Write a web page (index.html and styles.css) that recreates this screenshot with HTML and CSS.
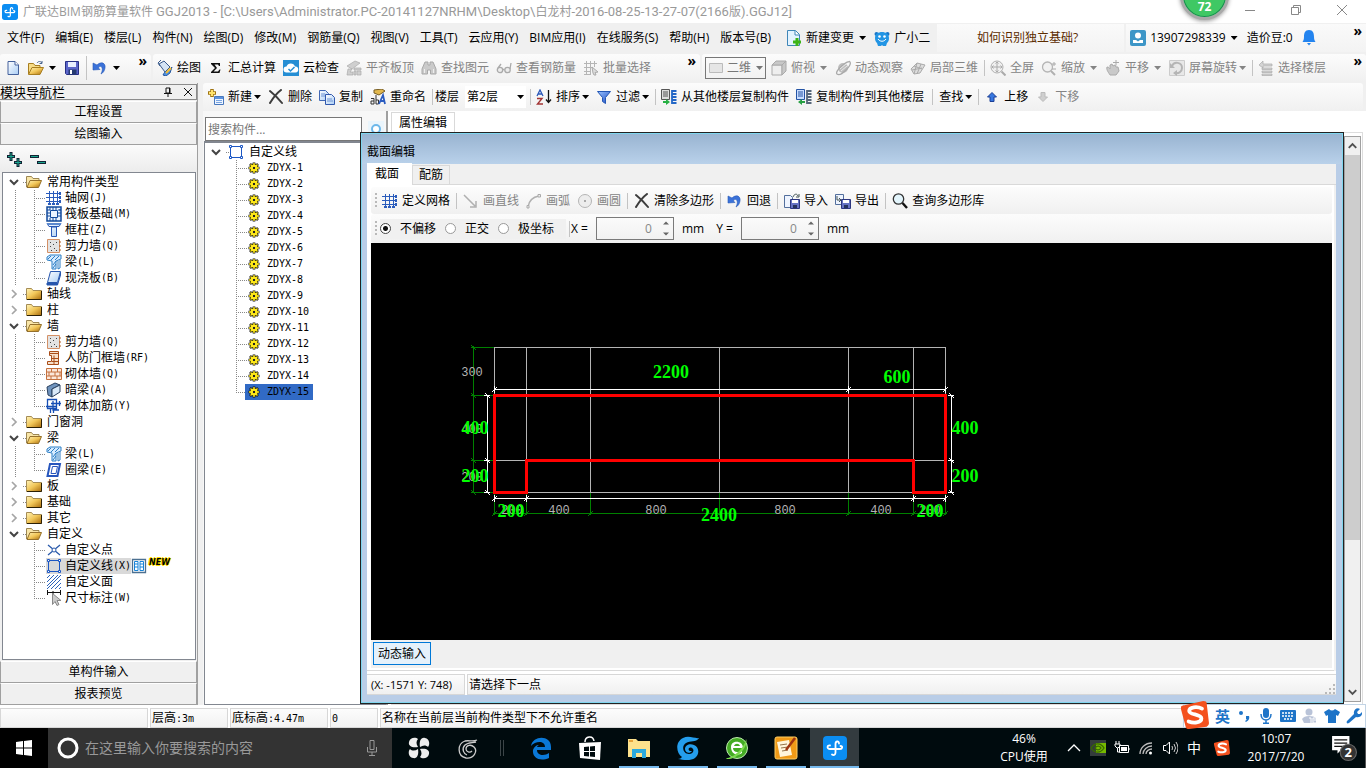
FILE: index.html
```html
<!DOCTYPE html>
<html lang="zh-CN">
<head>
<meta charset="utf-8">
<title>广联达BIM钢筋算量软件 GGJ2013</title>
<link rel="stylesheet" href="styles.css">
</head>
<body>
<svg class="defs" aria-hidden="true">
  <defs>
    <linearGradient id="gold" x1="0" y1="0" x2="1" y2="1"><stop offset="0" stop-color="#fff3b8"/><stop offset=".5" stop-color="#f1c658"/><stop offset="1" stop-color="#a86b0c"/></linearGradient>
    <linearGradient id="blue" x1="0" y1="0" x2="1" y2="1"><stop offset="0" stop-color="#9cc4ff"/><stop offset="1" stop-color="#1747c0"/></linearGradient>
    <linearGradient id="pale" x1="0" y1="0" x2="1" y2="1"><stop offset="0" stop-color="#fff"/><stop offset="1" stop-color="#a9cdf5"/></linearGradient>
  </defs>
  <symbol id="logo" viewBox="0 0 24 24"><rect width="24" height="24" rx="4" fill="#0b8df2"/><g fill="none" stroke="#fff" stroke-width="1.800" stroke-linecap="round"><path d="M9 18.500c2 1.500 3.500 0 3.500-2V8c0-3 3.500-3.500 3.500-.5"/><path d="M7 9.500c-3-.5-3.500 3.500 0 3.500h10c2.500 0 3-3 .5-3"/></g></symbol>
  <symbol id="new" viewBox="0 0 16 16"><path d="M3 1.500h7l3.500 3.500v9.500H3z" fill="url(#pale)" stroke="#44619c"/><path d="M10 1.500V5h3.500" fill="#fff" stroke="#44619c"/></symbol>
  <symbol id="open" viewBox="0 0 16 16"><path d="M.5 14V3.500h5l1.500 2h5V8" fill="#f7dc87" stroke="#a87e20"/><path d="M.5 14.500 4 7.500h11.500l-3.500 7z" fill="url(#gold)" stroke="#a87e20"/><path d="M9 3c1.500-2 3.500-2 5 0m0-2v2.500h-2.500" fill="none" stroke="#47638d"/></symbol>
  <symbol id="save" viewBox="0 0 16 16"><path d="M1.500 1.500h13v13h-12l-1-1z" fill="#5b65c9" stroke="#262f85"/><path d="M4 2h8v5H4z" fill="#e8efff"/><path d="M4.500 9.500h8v5h-8z" fill="#263b71"/><path d="M6 10h2v4H6z" fill="#fff"/></symbol>
  <symbol id="undo" viewBox="0 0 16 16"><path d="M5 5c4-4 9-2 8 3-.5 3-2 5-4 6 1.500-3 2-6 0-7.500C8 6 7 6.500 6.500 8L8 9.500 1 10V3z" fill="#3b72d9" stroke="#2759b6" stroke-width=".6"/></symbol>
  <symbol id="paint" viewBox="0 0 16 16"><path d="m2 4 5-3 6 6-5 5z" fill="#d5e4f5" stroke="#38598b"/><path d="M3 6 1 3l3-3" fill="none" stroke="#38598b"/><path d="M6 15c2-4 3-4 5-4l4-4-2 6-4 3z" fill="#4b8fe0" stroke="#2759a0"/><path d="m9 13 5-5" stroke="#f3bd36" stroke-width="2"/></symbol>
  <symbol id="sigma" viewBox="0 0 16 16"><path d="M3 3h9v3h-1l-1-1.500H6.500L9 8l-3.500 3.500h4.500l1.500-2h1L11.500 13H3v-1l4-4-4-4z" fill="#111"/></symbol>
  <symbol id="cloud" viewBox="0 0 16 16"><path d="M0 0h16v16H0z" fill="#258ed4"/><path d="M3.500 12.500a3 3 0 0 1 0-6 4.500 4.500 0 0 1 8.500 0 3 3 0 0 1 .5 6z" fill="#fff"/><path d="m5.500 9 2 2 4-4" fill="none" stroke="#258ed4" stroke-width="1.500"/></symbol>
  <symbol id="slab" viewBox="0 0 16 16"><path d="m1 6 8-5 5 2-8 6zM8 8h7v2H8zm0 3h2v4H8zm3 0h4v4h-4zM2 9h4l-2 3h3v3H1z" fill="#cfcfcf" stroke="#aaa" stroke-width=".7"/></symbol>
  <symbol id="binoc" viewBox="0 0 16 16"><path d="M4 2h3v3h2V2h3l3 7v5H9.500v-4h-3v4H1V9z" fill="#cacaca" stroke="#a8a8a8"/><path d="M3.500 9v4m9-4v4" stroke="#eee"/></symbol>
  <symbol id="glasses" viewBox="0 0 16 16"><g fill="#ededed" stroke="#aaa" stroke-width="1.300"><circle cx="4" cy="10" r="2.700"/><circle cx="11.500" cy="10" r="2.700"/><path d="M6.500 9.500h2M2 8l3-4M14 9l1-6" fill="none"/></g></symbol>
  <symbol id="batch" viewBox="0 0 16 16"><path d="M1 3.500h13M1 7.500h8M1 11.500h7M3.500 1v14m4-14v14m4-14v6M1 14.500h6" stroke="#b5b5b5" fill="none"/><path d="m9 7 6 5-3 .5L13 15h-2l-1-2z" fill="#ddd" stroke="#aaa"/></symbol>
  <symbol id="flat" viewBox="0 0 16 16"><path d="M1.500 3.500h13v9h-13z" fill="#e5e5e5" stroke="#bbb"/></symbol>
  <symbol id="cube" viewBox="0 0 16 16"><path d="M1 5h10v10H1z" fill="#eee" stroke="#aaa"/><path d="m1 5 4-4h10l-4 4zM15 1v10l-4 4V5z" fill="#c8c8c8" stroke="#aaa"/></symbol>
  <symbol id="orbit" viewBox="0 0 16 16"><circle cx="8" cy="8" r="5" fill="#bdbdbd"/><path d="M2 14C-1 11 14-1 15 2c2 3-9 15-13 12z" fill="none" stroke="#a9a9a9" stroke-width="1.300"/><path d="m5 9 6-5M6 11l6-5" stroke="#e8e8e8"/></symbol>
  <symbol id="part3d" viewBox="0 0 16 16"><path d="m1 9 6-6 8 2-5 8-6 1z" fill="#ddd" stroke="#aaa"/><path d="m4 6 8 3M7 3l-3 11M11 4l-4 10M2 10l10-2" stroke="#aaa" fill="none"/></symbol>
  <symbol id="fit" viewBox="0 0 16 16"><circle cx="7" cy="7" r="6" fill="#f0f0f0" stroke="#b0b0b0"/><path d="M7 2v10M2 7h10M5.500 3.500 7 2l1.500 1.500M5.500 10.500 7 12l1.500-1.500M3.500 5.500 2 7l1.500 1.500m7-3L12 7l-1.500 1.500" fill="none" stroke="#aaa"/><path d="m11.500 11.500 4 4" stroke="#aaa" stroke-width="2"/></symbol>
  <symbol id="zoom" viewBox="0 0 16 16"><circle cx="6.500" cy="7" r="5" fill="#f2f2f2" stroke="#b5b5b5" stroke-width="1.300"/><path d="m10 11 4 4" stroke="#b0b0b0" stroke-width="2"/><path d="M11 4h4m-2-2v4M11 9h4" stroke="#aaa"/></symbol>
  <symbol id="pan" viewBox="0 0 16 16"><path d="M2 7c2 0 2 1 3 2V5l2-1 1 2 2-1 1 2h2l1 4-3 4H5c-1-2-4-5-3-8z" fill="#c9c9c9" stroke="#aaa"/><path d="M8 2.500h6m-3-3v6" stroke="#aaa"/></symbol>
  <symbol id="rotate" viewBox="0 0 16 16"><path d="M.5.500h15v15H.5z" fill="#e8e8e8" stroke="#ccc"/><path d="M3 6c2-5 10-4 10 2 0 4-4 6-7 5" fill="none" stroke="#b5b5b5" stroke-width="2"/><path d="M1 3v5h5M8 10l-4 3 4 3" fill="#b5b5b5"/></symbol>
  <symbol id="floors" viewBox="0 0 16 16"><path d="m1 5 4-4v3h9v2H5v2zM4 8h10v1.500H4zm0 3h10v1.500H4zm0 3h10v1.500H4z" fill="#d5d5d5" stroke="#aaa" stroke-width=".7"/></symbol>
  <symbol id="create" viewBox="0 0 16 16"><path d="M4 0v8M0 4h8" stroke="#a07410" stroke-width="3.500"/><path d="M4 1v6M1 4h6" stroke="#ffe36d" stroke-width="2"/><path d="M6.500 7.500h9v8h-9z" fill="#eef5ff" stroke="#4878bd"/><path d="M7 8h8v2H7z" fill="#5b92df"/><path d="M8 11.500h6M8 13.500h6" stroke="#79a5e2"/></symbol>
  <symbol id="del" viewBox="0 0 16 16"><path d="M2 2c5 4 8 7 12 12M13 1C9 4 5 9 2 14" fill="none" stroke="#3c3c3c" stroke-width="2" stroke-linecap="round"/></symbol>
  <symbol id="copy" viewBox="0 0 16 16"><path d="M.5 1.500h6l3 3v7h-9z" fill="url(#pale)" stroke="#4168b5"/><path d="M6.500 5.500h6l3 3v7h-9z" fill="url(#pale)" stroke="#3158ad"/><path d="M2 5h4M2 7h4m2 3h5m-5 2h6" stroke="#6c93d4"/></symbol>
  <symbol id="rename" viewBox="0 0 16 16"><path d="m4 1 8-1 3 2-6 4-5-2z" fill="#e2b84d" stroke="#765c24"/><path d="M1 9.500h3V15H1v-3h3M6 6v9h2.500v-4H6" fill="none" stroke="#333"/><path d="m9 15 4-9 2 9m-5-3h5" fill="none" stroke="#2b5cc0" stroke-width="1.800"/></symbol>
  <symbol id="sort" viewBox="0 0 16 16"><path d="m1 7 3-6 3 6M2 5h4" fill="none" stroke="#2b58b9" stroke-width="1.300"/><path d="M1 9.500h5L1.500 15H7" fill="none" stroke="#a23434" stroke-width="1.400"/><path d="M12.500 1v12M10 10.500l2.500 3 2.500-3" fill="none" stroke="#111" stroke-width="1.300"/></symbol>
  <symbol id="filter" viewBox="0 0 16 16"><path d="M1.500 2.500h13L9.500 8.500v6l-3-2v-4z" fill="url(#blue)" stroke="#2457b5"/></symbol>
  <symbol id="fromfloor" viewBox="0 0 16 16"><path d="M.5.500h8v10h-8z" fill="#ddd" stroke="#555"/><path d="M2 3h5M2 5h5M2 7h5" stroke="#555"/><path d="M2 12h3v-2L9 13l-4 3v-2H2z" fill="#27b043"/><path d="M11.500 2h4m-4 3h4m-4 3h4m-4 3h4m-4 3h4M11 1v14" stroke="#2467c6" stroke-width="1.800"/></symbol>
  <symbol id="tofloor" viewBox="0 0 16 16"><path d="M.5.500h8v10h-8z" fill="#c9ddff" stroke="#2454a5"/><path d="M2 3h5M2 5h5M2 7h5" stroke="#2454a5"/><path d="M9 12H6v-2l-4 3 4 3v-2h3z" fill="#27a043"/><path d="M11.500 2h4m-4 3h4m-4 3h4m-4 3h4m-4 3h4M11 1v14" stroke="#56677a" stroke-width="1.800"/></symbol>
  <symbol id="up" viewBox="0 0 16 16"><path d="m8 3.500 4.500 4.500H10v4.500H6V8H3.500z" fill="#3777df" stroke="#1b3f96"/></symbol>
  <symbol id="down" viewBox="0 0 16 16"><path d="m8 12.500 4.500-4.500H10V3.500H6V8H3.500z" fill="#cfcfcf" stroke="#bbb"/></symbol>
  <symbol id="change" viewBox="0 0 16 16"><path d="M1.500.500h8l4 4v11h-12z" fill="#e3f3ff" stroke="#3f86b8"/><path d="M9 1v4h4" fill="#fff" stroke="#3f86b8"/><path d="M11 8v8M7 12h8" stroke="#3cb418" stroke-width="3"/></symbol>
  <symbol id="mascot" viewBox="0 0 16 16"><circle cx="2.500" cy="4" r="2" fill="#1976c7"/><circle cx="13.500" cy="4" r="2" fill="#1976c7"/><path d="M1 8c0-8 14-8 14 0 0 3-1 4-2 5l-1 3h-3l-1-1-1 1H4l-1-3C2 12 1 11 1 8z" fill="#2395e4"/><circle cx="5.500" cy="6.500" r="1.300" fill="#fff"/><circle cx="10.500" cy="6.500" r="1.300" fill="#fff"/><path d="M4 9c2 3 6 3 8 0" stroke="#fff" fill="none"/></symbol>
  <symbol id="user" viewBox="0 0 16 16"><rect width="16" height="16" rx="2" fill="#3d96c7"/><circle cx="8" cy="5.500" r="3" fill="#fff"/><path d="M3 13v-3h3l2 1.500L10 10h3v3z" fill="#fff"/></symbol>
  <symbol id="bell" viewBox="0 0 16 16"><path d="M8 0c4 0 5 3 5 7 0 3 1 4 1.500 5h-13C2 11 3 10 3 7c0-4 1-7 5-7zM6 13h4l-2 2.500z" fill="#2484ef"/></symbol>
  <symbol id="folder" viewBox="0 0 16 16"><path d="M.5 2.500h5l1.500 2h8.500v9H.5z" fill="url(#gold)" stroke="#a58c55"/><path d="M15.500 5v8.500H1" fill="none" stroke="#2c2005"/></symbol>
  <symbol id="folderopen" viewBox="0 0 16 16"><path d="M.5 13V2.500h5l1.500 2h6V7" fill="#f9e6a8" stroke="#9c8652"/><path d="M1 13.500 4 6.500h11.500l-3 7z" fill="url(#gold)" stroke="#94702c"/></symbol>
  <symbol id="grid" viewBox="0 0 16 16"><path d="M0 3.500h14M0 7.500h14M0 11.500h14M3.500 1v14m4-14v14m4-14v14" stroke="#2a5cbc"/><path d="M13 2h2v3h-2zm0 4h2v3h-2zm0 4h2v3h-2zM2 13h3v2H2zm4 0h3v2H6zm4 0h3v2h-3z" fill="#2a5cbc"/></symbol>
  <symbol id="raft" viewBox="0 0 16 16"><path d="M1 1h14v14H1z" fill="#eaf3ff" stroke="#124a9c" stroke-width="1.500"/><path d="M4.500 4.500h7v7h-7zM4 1v3M7 1v3m3-3v3m3 0h2M4 12v3m3-3v3m3-3v3M1 4h3M1 7h3m-3 3h3m8-6h3m-3 3h3m-3 3h3" fill="none" stroke="#124a9c"/></symbol>
  <symbol id="column" viewBox="0 0 16 16"><path d="M1 1.500h14l-2 3H3zM5.500 5h5v9.500h-5z" fill="url(#pale)" stroke="#2858b6"/><path d="M1 1h14v2H1z" fill="#5c88ce"/></symbol>
  <symbol id="wall" viewBox="0 0 16 16"><path d="M1.500 1.500h12v13h-12z" fill="#e3e3e3" stroke="#d49066"/><path d="M4 4h1v1H4zm3 2h1v1H7zM4 8h1v1H4zm4 2h1v1H8zm-3 2h1v1H5zm5-8h1v1h-1zm0 8h1v1h-1z" fill="#444"/><path d="M13 4h2M13 8h2m-2 4h2" stroke="#b55e21"/></symbol>
  <symbol id="beam" viewBox="0 0 16 16"><path d="m1 3 3-2h11v4l-5 2v8H6V7L1 6z" fill="#d6ebff" stroke="#2d7fc5"/><path d="m2 5 3-3m0 4 4-4m0 4 4-4M7 11l3-4m-3 7 3-4M12 7v8l2-1V6" stroke="#2d7fc5" fill="none"/></symbol>
  <symbol id="slabb" viewBox="0 0 16 16"><path d="M4.500 1.500h10l-3 11h-10z" fill="url(#pale)" stroke="#2756ad"/><path d="M1 13h10.500v2H1zM14.500 2v3l-3 10" fill="#2756ad" stroke="#2756ad"/></symbol>
  <symbol id="ring" viewBox="0 0 16 16"><path d="M4 2h10l-2.500 12h-10z" fill="#fff" stroke="#2756bd" stroke-width="2"/><path d="M6.500 4.500h5l-1.500 7H5z" fill="#fff" stroke="#2756bd"/></symbol>
  <symbol id="doorwall" viewBox="0 0 16 16"><path d="M3.500 1.500h9v13h-11v-3h4v-6h-2z" fill="#f7dfc9" stroke="#a94d18"/><path d="M4 3.500h8m-4 2v9m-2-6h6m-6 3h6" stroke="#a94d18"/></symbol>
  <symbol id="brick" viewBox="0 0 16 16"><path d="M.5 2.500h15v11H.5z" fill="#fbe8dc" stroke="#c5713e"/><path d="M1 6h14M1 10h14M5.500 3v3m6-3v3M3 6v4m6-4v4m5-4v4m-9 0v3m6-3v3" stroke="#c5713e"/></symbol>
  <symbol id="hidden" viewBox="0 0 16 16"><path d="m1 5 8-4 5 2-8 4v8l-4-2z" fill="#6f93bd" stroke="#29405f"/><path d="m6 7 8-4v7l-8 5z" fill="#d9e9f8" stroke="#29405f"/></symbol>
  <symbol id="rebar" viewBox="0 0 16 16"><path d="M1.500 1.500h9v9h-9zM0 8.500h10M4.500 11v4m3-4v4M5 5.500h10M13.500 3v5M7 3v9h6" stroke="#174fb5" stroke-width="1.300" fill="none"/></symbol>
  <symbol id="point" viewBox="0 0 16 16"><path d="m2 3 12 10M14 3 2 13" stroke="#2a5aab" stroke-width="1.300"/><circle cx="8" cy="8" r="2" fill="#fff" stroke="#2a5aab"/></symbol>
  <symbol id="poly" viewBox="0 0 16 16"><path d="M2.500 2.500h11v11h-11z" fill="none" stroke="#1c57c4"/><path d="M1.500 1.500h2v2h-2zm11 0h2v2h-2zm-11 11h2v2h-2zm11 0h2v2h-2z" fill="#fff" stroke="#1c57c4"/></symbol>
  <symbol id="hatch" viewBox="0 0 16 16"><path d="m1 4 3-3M1 8l7-7M1 12 12 1M1 15 15 1M5 15 15 5M9 15l6-6m-2 6 2-2" stroke="#2b63ba"/></symbol>
  <symbol id="dim" viewBox="0 0 16 16"><path d="M1 2.500h14M1.500 0v5m13-5v5M7 1v3" stroke="#111"/><path d="M6.500 3.500v11l2.500-3 2 4 2-1-2-4h4z" fill="#ccc" stroke="#888"/></symbol>
  <symbol id="gear" viewBox="0 0 16 16"><path d="M8 2.500v11M2.500 8h11M4 4l8 8m0-8-8 8" stroke="#111" stroke-width="2.600"/><circle cx="8" cy="8" r="4.500" fill="#111"/><path d="M8 3v10M3 8h10M4.500 4.500l7 7m0-7-7 7" stroke="#ffe91a" stroke-width="1.400"/><circle cx="8" cy="8" r="2.800" fill="none" stroke="#ffe91a" stroke-width="1.600"/><path d="M7 7h2v2H7z" fill="#222"/></symbol>
  <symbol id="expand" viewBox="0 0 10 16"><path d="m1 6 4 4 4-4" fill="none" stroke="#444" stroke-width="2"/></symbol>
  <symbol id="collapse" viewBox="0 0 10 16"><path d="m3 4 4 4-4 4" fill="none" stroke="#a5a5a5" stroke-width="1.700"/></symbol>
  <symbol id="info" viewBox="0 0 16 16"><path d="M1.500 1.500h13v13h-13z" fill="#fff" stroke="#4c7091" stroke-width="1.300"/><path d="M3.500 3.500h3.500v9H3.500zM9 3.500h3.500v9H9zM4 6h3m-3 3h3m2-3h3M9 9h3" fill="none" stroke="#1683d8"/></symbol>
  <symbol id="line" viewBox="0 0 16 16"><path d="m1 2 11 11m1-5v6H7" fill="none" stroke="#b0b0b0" stroke-width="1.500"/></symbol>
  <symbol id="arc" viewBox="0 0 16 16"><path d="M2 14C3 7 7 4 13 3" fill="none" stroke="#b0b0b0" stroke-width="1.500"/><path d="M12 1.500h2.500V4H12zM1 12.500h2V15H1z" fill="#eee" stroke="#aaa"/></symbol>
  <symbol id="circle" viewBox="0 0 16 16"><circle cx="8" cy="8" r="6.500" fill="#ededed" stroke="#b5b5b5"/><path d="M7 7h2v2H7z" fill="#aaa"/></symbol>
  <symbol id="import" viewBox="0 0 16 16"><path d="M.5 2.500h6l2 2v10h-8z" fill="#eef4ff" stroke="#536f9d"/><path d="M6.500 6.500h9v9h-9z" fill="#6572c4" stroke="#2d367f"/><path d="M8 7h6v3H8z" fill="#fff"/><path d="M9 12h4v3H9z" fill="#25325e"/><path d="M9 4c1-3 4-4 5-1m1-2v3h-3" fill="none" stroke="#455"/></symbol>
  <symbol id="export" viewBox="0 0 16 16"><path d="M.5 1.500h8v10h-8z" fill="#eef4ff" stroke="#536f9d"/><path d="M6.500 6.500h9v9h-9z" fill="#6572c4" stroke="#2d367f"/><path d="M8 7h6v3H8z" fill="#fff"/><path d="M9 12h4v3H9z" fill="#25325e"/><path d="M2 3v4h4M4 5l2 2-2 2" fill="none" stroke="#455"/></symbol>
  <symbol id="query" viewBox="0 0 16 16"><circle cx="6.500" cy="6" r="5.200" fill="#e3f5fc" stroke="#333" stroke-width="1.300"/><path d="m10.500 10 4.500 5" stroke="#111" stroke-width="2.400"/></symbol>
  <symbol id="sogou" viewBox="0 0 24 24"><path d="m1 4 18-4q3 0 3 2l2 17q0 2-2 3L7 24q-3 0-3-2L0 7q-1-2 1-3z" fill="#f4511e"/><path d="M18 6.500C14 4.500 7 5 7 8.500 7 12 17.500 11 17.500 15c0 4-7 4-11 2.500" fill="none" stroke="#fff" stroke-width="3.200" stroke-linecap="round"/></symbol>
</svg>

<header class="titlebar">
  <svg class="i"><use href="#logo"/></svg>
  <h1>广联达BIM钢筋算量软件 <span class="wide">GGJ2013 - [C:\Users\Administrator.PC-20141127NRHM\Desktop\</span>白龙村<span class="wide">-2016-08-25-13-27-07(2166</span>版<span class="wide">).GGJ12]</span></h1>
  <div class="winbtns">
    <button aria-label="最小化"><svg viewBox="0 0 12 12"><path d="M1 6.500h10"/></svg></button>
    <button aria-label="还原"><svg viewBox="0 0 12 12"><path d="M1.500 3.500h7v7h-7zM3.500 3V1.500h7v7H9"/></svg></button>
    <button aria-label="关闭"><svg viewBox="0 0 12 12"><path d="m1 1 10 10M11 1 1 11"/></svg></button>
  </div>
  <div class="speed">72</div>
</header>

<nav class="menubar">
  <div class="menus">
    <button>文件(F)</button><button>编辑(E)</button><button>楼层(L)</button><button>构件(N)</button><button>绘图(D)</button><button>修改(M)</button><button>钢筋量(Q)</button><button>视图(V)</button><button>工具(T)</button><button>云应用(Y)</button><button>BIM应用(I)</button><button>在线服务(S)</button><button>帮助(H)</button><button>版本号(B)</button>
  </div>
  <button class="tb"><svg class="i"><use href="#change"/></svg>新建变更<i class="arr far"></i></button>
  <button class="tb"><svg class="i"><use href="#mascot"/></svg>广小二</button>
  <a class="tip" href="#help">如何识别独立基础?</a>
  <div class="account">
    <button class="tb"><svg class="i"><use href="#user"/></svg>13907298339<i class="arr far"></i></button>
    <button class="tb">造价豆:0</button>
    <button class="tb" aria-label="通知"><svg class="i"><use href="#bell"/></svg></button>
    <span class="more">»</span>
  </div>
</nav>

<div class="toolrow">
  <div class="bar files">
    <button class="tb" aria-label="新建"><svg class="i"><use href="#new"/></svg></button>
    <button class="tb" aria-label="打开"><svg class="i"><use href="#open"/></svg><i class="arr far"></i></button>
    <button class="tb" aria-label="保存"><svg class="i"><use href="#save"/></svg></button>
    <span class="sep"></span>
    <button class="tb" aria-label="撤销"><svg class="i"><use href="#undo"/></svg><i class="arr far"></i></button>
    <span class="more">»</span>
  </div>
  <div class="bar draw">
    <button class="tb"><svg class="i"><use href="#paint"/></svg>绘图</button>
    <button class="tb"><svg class="i"><use href="#sigma"/></svg>汇总计算</button>
    <button class="tb"><svg class="i"><use href="#cloud"/></svg>云检查</button>
    <button class="tb" disabled><svg class="i"><use href="#slab"/></svg>平齐板顶</button>
    <button class="tb" disabled><svg class="i"><use href="#binoc"/></svg>查找图元</button>
    <button class="tb" disabled><svg class="i"><use href="#glasses"/></svg>查看钢筋量</button>
    <button class="tb" disabled><svg class="i"><use href="#batch"/></svg>批量选择</button>
    <span class="more">»</span>
  </div>
  <div class="bar view">
    <label class="combo dim"><svg class="i"><use href="#flat"/></svg><select disabled aria-label="视图模式"><option>二维</option></select><i class="arr"></i></label>
    <button class="tb" disabled><svg class="i"><use href="#cube"/></svg>俯视<i class="arr far"></i></button>
    <button class="tb" disabled><svg class="i"><use href="#orbit"/></svg>动态观察</button>
    <button class="tb" disabled><svg class="i"><use href="#part3d"/></svg>局部三维</button>
    <span class="sep"></span>
    <button class="tb" disabled><svg class="i"><use href="#fit"/></svg>全屏</button>
    <button class="tb" disabled><svg class="i"><use href="#zoom"/></svg>缩放<i class="arr far"></i></button>
    <button class="tb" disabled><svg class="i"><use href="#pan"/></svg>平移<i class="arr far"></i></button>
    <button class="tb" disabled><svg class="i"><use href="#rotate"/></svg>屏幕旋转<i class="arr"></i></button>
    <span class="sep"></span>
    <button class="tb" disabled><svg class="i"><use href="#floors"/></svg>选择楼层</button>
    <span class="more">»</span>
  </div>
</div>

<div class="main">
  <aside class="dock">
    <div class="dockhead"><span>模块导航栏</span>
      <svg viewBox="0 0 10 10"><path d="M3 1h4v5H3zM1 6.500h8M5 7v3M6.500 1v5" /></svg>
      <svg viewBox="0 0 10 10"><path d="m1 1 8 8M9 1 1 9"/></svg>
    </div>
    <button class="page">工程设置</button>
    <button class="page">绘图输入</button>
    <div class="docktools">
      <button aria-label="全部展开"><svg viewBox="0 0 18 16"><path d="M5 1v9M1 5.500h8M12 7v9M8 11.500h8" stroke="#123" stroke-width="3"/><path d="M5 2v7M2 5.500h6M12 8v7M9 11.500h6" stroke="#18a58d"/></svg></button>
      <button aria-label="全部折叠"><svg viewBox="0 0 18 16"><path d="M1 5.500h9M8 11.500h9" stroke="#123" stroke-width="3"/><path d="M2 5.500h7M9 11.500h7" stroke="#18a58d"/></svg></button>
    </div>
    <ul class="tree modules">
      <li><div class="branch"><svg class="x"><use href="#expand"/></svg><svg class="i"><use href="#folderopen"/></svg>常用构件类型</div>
        <ul>
          <li><svg class="i"><use href="#grid"/></svg>轴网<b>(J)</b></li>
          <li><svg class="i"><use href="#raft"/></svg>筏板基础<b>(M)</b></li>
          <li><svg class="i"><use href="#column"/></svg>框柱<b>(Z)</b></li>
          <li><svg class="i"><use href="#wall"/></svg>剪力墙<b>(Q)</b></li>
          <li><svg class="i"><use href="#beam"/></svg>梁<b>(L)</b></li>
          <li><svg class="i"><use href="#slabb"/></svg>现浇板<b>(B)</b></li>
        </ul></li>
      <li><div class="branch"><svg class="x"><use href="#collapse"/></svg><svg class="i"><use href="#folder"/></svg>轴线</div></li>
      <li><div class="branch"><svg class="x"><use href="#collapse"/></svg><svg class="i"><use href="#folder"/></svg>柱</div></li>
      <li><div class="branch"><svg class="x"><use href="#expand"/></svg><svg class="i"><use href="#folderopen"/></svg>墙</div>
        <ul>
          <li><svg class="i"><use href="#wall"/></svg>剪力墙<b>(Q)</b></li>
          <li><svg class="i"><use href="#doorwall"/></svg>人防门框墙<b>(RF)</b></li>
          <li><svg class="i"><use href="#brick"/></svg>砌体墙<b>(Q)</b></li>
          <li><svg class="i"><use href="#hidden"/></svg>暗梁<b>(A)</b></li>
          <li><svg class="i"><use href="#rebar"/></svg>砌体加筋<b>(Y)</b></li>
        </ul></li>
      <li><div class="branch"><svg class="x"><use href="#collapse"/></svg><svg class="i"><use href="#folder"/></svg>门窗洞</div></li>
      <li><div class="branch"><svg class="x"><use href="#expand"/></svg><svg class="i"><use href="#folderopen"/></svg>梁</div>
        <ul>
          <li><svg class="i"><use href="#beam"/></svg>梁<b>(L)</b></li>
          <li><svg class="i"><use href="#ring"/></svg>圈梁<b>(E)</b></li>
        </ul></li>
      <li><div class="branch"><svg class="x"><use href="#collapse"/></svg><svg class="i"><use href="#folder"/></svg>板</div></li>
      <li><div class="branch"><svg class="x"><use href="#collapse"/></svg><svg class="i"><use href="#folder"/></svg>基础</div></li>
      <li><div class="branch"><svg class="x"><use href="#collapse"/></svg><svg class="i"><use href="#folder"/></svg>其它</div></li>
      <li><div class="branch"><svg class="x"><use href="#expand"/></svg><svg class="i"><use href="#folderopen"/></svg>自定义</div>
        <ul class="last">
          <li><svg class="i"><use href="#point"/></svg>自定义点</li>
          <li><span class="picked"><svg class="i"><use href="#poly"/></svg>自定义线<b>(X)</b></span><svg class="i info"><use href="#info"/></svg><em>NEW</em></li>
          <li><svg class="i"><use href="#hatch"/></svg>自定义面</li>
          <li><svg class="i"><use href="#dim"/></svg>尺寸标注<b>(W)</b></li>
        </ul></li>
    </ul>
    <button class="page">单构件输入</button>
    <button class="page">报表预览</button>
  </aside>

  <section class="right">
    <div class="bar comps">
      <button class="tb"><svg class="i"><use href="#create"/></svg>新建<i class="arr"></i></button>
      <button class="tb"><svg class="i"><use href="#del"/></svg>删除</button>
      <button class="tb"><svg class="i"><use href="#copy"/></svg>复制</button>
      <button class="tb"><svg class="i"><use href="#rename"/></svg>重命名</button>
      <span class="sep"></span>
      <label class="floor">楼层<span class="combo plain"><select><option>第2层</option></select><i class="arr"></i></span></label>
      <span class="sep"></span>
      <button class="tb"><svg class="i"><use href="#sort"/></svg>排序<i class="arr"></i></button>
      <button class="tb"><svg class="i"><use href="#filter"/></svg>过滤<i class="arr"></i></button>
      <span class="sep"></span>
      <button class="tb"><svg class="i"><use href="#fromfloor"/></svg>从其他楼层复制构件</button>
      <button class="tb"><svg class="i"><use href="#tofloor"/></svg>复制构件到其他楼层</button>
      <span class="sep wide"></span>
      <button class="tb">查找<i class="arr"></i></button>
      <span class="sep"></span>
      <button class="tb"><svg class="i"><use href="#up"/></svg>上移</button>
      <button class="tb" disabled><svg class="i"><use href="#down"/></svg>下移</button>
    </div>

    <div class="workspace">
      <div class="complist">
        <div class="search"><input type="text" placeholder="搜索构件..." aria-label="搜索构件"><button aria-label="搜索"><svg viewBox="0 0 16 16"><circle cx="8" cy="8" r="4" fill="#fff" stroke="#6db8ea" stroke-width="2"/></svg></button></div>
        <ul class="tree comptree">
          <li><div class="branch"><svg class="x"><use href="#expand"/></svg><svg class="i"><use href="#poly"/></svg>自定义线</div>
            <ul>
              <li><svg class="i"><use href="#gear"/></svg><b>ZDYX-1</b></li>
              <li><svg class="i"><use href="#gear"/></svg><b>ZDYX-2</b></li>
              <li><svg class="i"><use href="#gear"/></svg><b>ZDYX-3</b></li>
              <li><svg class="i"><use href="#gear"/></svg><b>ZDYX-4</b></li>
              <li><svg class="i"><use href="#gear"/></svg><b>ZDYX-5</b></li>
              <li><svg class="i"><use href="#gear"/></svg><b>ZDYX-6</b></li>
              <li><svg class="i"><use href="#gear"/></svg><b>ZDYX-7</b></li>
              <li><svg class="i"><use href="#gear"/></svg><b>ZDYX-8</b></li>
              <li><svg class="i"><use href="#gear"/></svg><b>ZDYX-9</b></li>
              <li><svg class="i"><use href="#gear"/></svg><b>ZDYX-10</b></li>
              <li><svg class="i"><use href="#gear"/></svg><b>ZDYX-11</b></li>
              <li><svg class="i"><use href="#gear"/></svg><b>ZDYX-12</b></li>
              <li><svg class="i"><use href="#gear"/></svg><b>ZDYX-13</b></li>
              <li><svg class="i"><use href="#gear"/></svg><b>ZDYX-14</b></li>
              <li><span class="chosen"><svg class="i"><use href="#gear"/></svg><b>ZDYX-15</b></span></li>
            </ul></li>
        </ul>
      </div>
      <div class="props">
        <button class="tab">属性编辑</button>
        <div class="proppage">
          <div class="scroll"><svg viewBox="0 0 16 16"><path d="m4 10 4-4 4 4"/></svg><div class="thumb"></div><div class="track"></div><svg viewBox="0 0 16 16"><path d="m4 6 4 4 4-4"/></svg></div>
        </div>
      </div>

      <section class="dialog" role="dialog" aria-label="截面编辑">
        <h2>截面编辑</h2>
        <div class="dbody">
          <div class="tabs"><button class="on">截面</button><button>配筋</button></div>
          <div class="dcontent">
            <div class="bar dbar"><span class="grip"></span>
              <button class="tb"><svg class="i"><use href="#grid"/></svg>定义网格</button>
              <span class="sep"></span>
              <button class="tb" disabled><svg class="i"><use href="#line"/></svg>画直线</button>
              <button class="tb" disabled><svg class="i"><use href="#arc"/></svg>画弧</button>
              <button class="tb" disabled><svg class="i"><use href="#circle"/></svg>画圆</button>
              <span class="sep"></span>
              <button class="tb"><svg class="i"><use href="#del"/></svg>清除多边形</button>
              <span class="sep"></span>
              <button class="tb"><svg class="i"><use href="#undo"/></svg>回退</button>
              <span class="sep"></span>
              <button class="tb"><svg class="i"><use href="#import"/></svg>导入</button>
              <button class="tb"><svg class="i"><use href="#export"/></svg>导出</button>
              <span class="sep"></span>
              <button class="tb"><svg class="i"><use href="#query"/></svg>查询多边形库</button>
            </div>
            <div class="bar dbar coords"><span class="grip"></span>
              <div class="radios">
                <label><input type="radio" name="offset" checked>不偏移</label>
                <label><input type="radio" name="offset">正交</label>
                <label><input type="radio" name="offset">极坐标</label>
              </div>
              <span class="sep"></span>
              <label class="num">X =<span class="spin"><input type="text" value="0" disabled><svg viewBox="0 0 8 16"><path d="m1 4 3-3 3 3zM1 12l3 3 3-3z"/></svg></span>mm</label>
              <label class="num">Y =<span class="spin"><input type="text" value="0" disabled><svg viewBox="0 0 8 16"><path d="m1 4 3-3 3 3zM1 12l3 3 3-3z"/></svg></span>mm</label>
            </div>
            <svg class="canvas">
              <g transform="translate(-371 -243)">
                <g class="gdim">
                  <path d="M494 347.500H471M494 395.500H471M494 460.500H471M494 492.500H471M473.500 346V493M494.500 493V515M526.500 493V515M590.500 493V515M719.500 493V515M848.500 493V515M913.500 493V515M945.500 493V515M493 513.500H947"/>
                  <path d="m471 345 5 5m-5 43 5 5m-5 60 5 5m-5 27 5 5M492 516l5-5m27 5 5-5m59 5 5-5m124 5 5-5m124 5 5-5m60 5 5-5m27 5 5-5"/>
                </g>
                <path class="grid" d="M494 347.500H945M494 460.500H945M494 492.500H945M494.500 347V492M526.500 347V492M590.500 347V492M719.500 347V492M848.500 347V492M913.500 347V492M945.500 347V492"/>
                <g class="gtext"><text x="472" y="376">300</text><text x="472" y="433">400</text><text x="472" y="481">200</text><text x="512" y="514">200</text><text x="559" y="514">400</text><text x="656" y="514">800</text><text x="785" y="514">800</text><text x="881" y="514">400</text><text x="930" y="514">200</text></g>
                <path class="wdim" d="M494 389.500H946M494 498.500H946M487.500 395V493M951.500 395V493M484 395.500h6M484 460.500h6M484 492.500h6M948 395.500h6M948 460.500h6M948 492.500h6M494.500 386v7M848.500 386v7M945.500 386v7M494.500 495v7M526.500 495v7M913.500 495v7M945.500 495v7M492 392l5-5m349 5 5-5m92 5 5-5M492 501l5-5m27 5 5-5m382 5 5-5m27 5 5-5M485 393l5 5m-5 60 5 5m-5 27 5 5M949 393l5 5m-5 60 5 5m-5 27 5 5"/>
                <path class="section" d="M494.500 395.500H945.500V492.500H913.500V460.500H526.500V492.500H494.500z"/>
                <g class="wtext"><text x="671" y="378">2200</text><text x="897" y="383">600</text><text x="475" y="434">400</text><text x="475" y="482">200</text><text x="965" y="434">400</text><text x="965" y="482">200</text><text x="511" y="517">200</text><text x="719" y="521">2400</text><text x="930" y="517">200</text></g>
              </g>
            </svg>
            <div class="dfoot"><button>动态输入</button></div>
          </div>
          <div class="dstatus"><span>(X: -1571 Y: 748)</span><span>请选择下一点</span><svg viewBox="0 0 12 12"><path d="M9 1h2v2H9zM9 5h2v2H9zM5 5h2v2H5zM9 9h2v2H9zM5 9h2v2H5zM1 9h2v2H1z"/></svg></div>
        </div>
      </section>
    </div>
  </section>
</div>

<footer class="status"><span></span><span>层高<b>:3m</b></span><span>底标高<b>:4.47m</b></span><span><b>0</b></span><span>名称在当前层当前构件类型下不允许重名</span></footer>

<div class="ime">
  <svg class="big"><use href="#sogou"/></svg><strong>英</strong>
  <svg viewBox="0 0 16 16"><circle cx="5" cy="5" r="2"/><path d="M10 8h3c1 3-1 5-3 6l-1-1c2-1 2-2 1-2z"/></svg>
  <svg viewBox="0 0 16 16"><rect x="5" y="0" width="6" height="10" rx="3"/><path d="M3 6c0 8 10 8 10 0M8 12v3M5 15.200h6" fill="none" stroke="#1e74c8" stroke-width="1.500"/></svg>
  <svg viewBox="0 0 16 16"><rect y="2" width="16" height="12" rx="1"/><path d="M2 5h12M2 8h12M4 11h8" stroke="#fff" stroke-width="1.500" stroke-dasharray="2 1"/></svg>
  <svg class="faint" viewBox="0 0 16 16"><circle cx="7" cy="4" r="3.500"/><path d="M0 11q2-3 7-3t7 2v5H2z"/><path d="M7 10h2v5m2-5h4m-4 0v5h4v-3h-3" fill="none" stroke="#fff"/></svg>
  <svg viewBox="0 0 16 16"><path d="m5 1-5 3 2 4 2-1v8h8V7l2 1 2-4-5-3q-3 3-6 0z"/></svg>
  <svg viewBox="0 0 16 16"><path d="m1 13 7-7c-1-4 3-7 6-5l-3 3 1 2h2l2-2c1 4-3 6-6 5l-7 6c-2 1-3 0-2-2z"/></svg>
</div>

<footer class="taskbar">
  <button class="start" aria-label="开始"><svg viewBox="0 0 16 16"><path d="m0 2 7-1v6.500H0zM8 1l8-1v7.500H8zM0 8.500h7V15l-7-1zm8 0h8V16l-8-1z" fill="#fff"/></svg></button>
  <label class="cortana"><svg class="ring" viewBox="0 0 22 22"><circle cx="11" cy="11" r="9" fill="none" stroke="#fff" stroke-width="3"/></svg><input type="text" placeholder="在这里输入你要搜索的内容" aria-label="搜索"><svg class="mic" viewBox="0 0 12 18"><path d="M4 1.500h4v9H4zM1.500 8v5h9V8M6 13v4M3 16.500h6" fill="none" stroke="#999"/></svg></label>
  <div class="apps">
    <button aria-label="应用"><svg viewBox="0 0 24 24"><g fill="#eee"><path d="M11 11C5 12 1 10 2 6c1-5 7-5 9-3-2 2-2 5 0 8z"/><path d="M13 11c-1-6 1-10 5-9 5 1 5 7 3 9-2-2-5-2-8 0z"/><path d="M13 13c6-1 10 1 9 5-1 5-7 5-9 3 2-2 2-5 0-8z"/><path d="M11 13c1 6-1 10-5 9-5-1-5-7-3-9 2 2 5 2 8 0z"/></g></svg></button>
    <button aria-label="应用"><svg viewBox="0 0 24 24"><path d="M21 4c-4 2-8 0-12 1-8 3-8 15 1 17 8 1 12-7 8-11-3-3-8-2-8 2 0 3 4 4 6 2M20 6c-4 1-8 0-11 3-4 4-1 9 2 10" fill="none" stroke="#ccc" stroke-width="1.300"/></svg></button>
    <span class="bars"></span>
    <button aria-label="Edge"><svg viewBox="0 0 24 24"><path d="M2 10C4-1 22-1 22 11v3H8c0 6 8 6 12 3v5C11 26 3 22 4 14c1-3 3-5 6-5-2 1-2 2-2 2h8c0-7-10-6-14-1z" fill="#0a78d7"/></svg></button>
    <button aria-label="应用商店"><svg viewBox="0 0 24 24"><path d="m1 7 22-1-1 18-20-2z" fill="#fff"/><path d="M7 6c0-6 8-7 9-1" fill="none" stroke="#fff" stroke-width="1.500"/><path d="m6 11 5-.5V15H6zM12 10.500l5-.5v5h-5zM6 16h5v4.500L6 20zm6 0h5v5l-5-.5z" fill="#000b0e"/></svg></button>
    <button class="run" aria-label="资源管理器"><svg viewBox="0 0 24 24"><path d="M1 3h8l2 2h12v16H1z" fill="#fde28c"/><path d="M2 4h4v2H2z" fill="#e8a43a"/><path d="M5 13h14v9h-4v-5H9v5H5z" fill="#2ba9dd"/></svg></button>
    <button class="run" aria-label="浏览器"><svg viewBox="0 0 24 24"><path d="M23 2c-4 1-10-3-16 0-8 4-7 15-1 19-1 1-2 2-4 2 5 1 13 2 17-1 5-4 4-11-1-13-4-2-9 0-9 4s5 5 7 2c-5 1-4-5 0-3 3 2 1 6-3 6-6 0-8-8-3-11 4-3 10 0 13-5z" fill="#249eed"/></svg></button>
    <button class="run" aria-label="浏览器"><svg viewBox="0 0 24 24"><circle cx="12" cy="12" r="10.500" fill="#44ab24" stroke="#bcebad"/><path d="M6 11c0-7 12-7 12 1H8c0 5 6 5 9 2v3C11 21 6 17 6 11zm3-1h6c-1-3-5-3-6 0z" fill="#fff"/><path d="M1 22C7 23 20 12 21 3c3 6-8 21-19 20z" fill="#7bd94d"/></svg></button>
    <button class="run" aria-label="编辑器"><svg viewBox="0 0 24 24"><rect x="1" y="1" width="22" height="22" rx="2" fill="#ef9a17" stroke="#ffce62"/><path d="m3 6 12-2 3 15-12 2z" fill="#fff5db"/><path d="m6 9 7-1m-6 4 7-1m-6 4 6-1" stroke="#96734a"/><path d="m12 14 9-12" stroke="#9e3410" stroke-width="2.500"/></svg></button>
    <button class="run active" aria-label="广联达"><svg><use href="#logo"/></svg></button>
  </div>
  <div class="cpu"><span>46%</span><span>CPU使用</span></div>
  <div class="tray">
    <svg viewBox="0 0 16 16"><path d="m2 11 6-6 6 6" fill="none" stroke="#fff" stroke-width="1.300"/></svg>
    <svg viewBox="0 0 16 16"><path d="M0 0h16v16H0z" fill="#343c3c"/><path d="M6 3h10v10H6z" fill="#76b900"/><path d="M1 8c4-6 10-5 13 0-4 6-10 5-13 0zm4 0c2-3 5-2 6 0-2 3-5 2-6 0z" fill="none" stroke="#386900" stroke-width="1.300"/></svg>
    <svg viewBox="0 0 16 16"><path d="M5.500 5.500h9v7h-9zM15 8v2M2 1v3m3-3v3M1 4h5v2L4 8H3L1 6zM3.500 8v4H5" fill="none" stroke="#fff"/><path d="M7 7h6v4H7z" fill="#fff"/></svg>
    <svg viewBox="0 0 16 16"><g fill="none" stroke="#bbb" stroke-width="1.300"><path d="M2 14C2 8 7 3 14 3"/><path d="M5 14c0-4 4-8 9-8"/><path d="M8 14c0-3 3-5 6-5"/></g><circle cx="12.500" cy="13" r="1.500" fill="#fff"/></svg>
    <svg viewBox="0 0 16 16"><path d="M1.500 5.500H4L7.500 2v12L4 10.500H1.500z" fill="none" stroke="#fff"/><path d="M10 6q1 2 0 4m2-6q3 4 0 8m2-10q4 6 0 12" fill="none" stroke="#ccc"/></svg>
    <span>中</span>
    <svg class="tail"><use href="#sogou"/></svg>
  </div>
  <div class="clock"><span>10:07</span><span>2017/7/20</span></div>
  <button class="notes" aria-label="通知"><svg viewBox="0 0 24 24"><path d="M1 1h16v13H9l-3 3v-3H1z" fill="#fff"/><path d="M3 4.500h12M3 7.500h12M3 10.500h9" stroke="#111"/><circle cx="16" cy="16" r="7.500" fill="#333" stroke="#666"/><text x="16" y="20.500">2</text></svg></button>
</footer>
</body>
</html>
```
FILE: styles.css
```css
* { box-sizing: border-box; }

html, body { height: 100%; }

body {
  margin: 0;
  display: flex;
  flex-direction: column;
  position: relative;
  overflow: hidden;
  background: #f0f0f0;
  color: #000;
  font: 12px/16px "Open Sans", "Noto Sans CJK SC", sans-serif;
}

button, input, select { font: inherit; color: inherit; }
button { border: 0; background: none; padding: 0; white-space: nowrap; }
ul { list-style: none; margin: 0; padding: 0; }
b { font: 10px/16px "DejaVu Sans Mono", monospace; }
.defs { position: absolute; width: 0; height: 0; }
.i { width: 16px; height: 16px; flex: none; }

/* title bar */
.titlebar { display: flex; align-items: center; height: 23px; padding-left: 2px; gap: 5px; background: #fff; }
.titlebar h1 { margin: 0; flex: 1; font-size: 12px; font-weight: 400; color: #999; white-space: nowrap; }
.titlebar .wide { font-family: Roboto, "Open Sans", sans-serif; font-size: 13px; }
.winbtns { display: flex; margin-right: 1px; }
.winbtns button { width: 46px; height: 20px; }
.winbtns svg { width: 12px; height: 12px; fill: none; stroke: #888; }
.speed {
  position: absolute; top: -29px; right: 137px; width: 49px; height: 49px; padding-top: 25px;
  border: 3px solid #a9a9a9; border-radius: 50%; background: #3fc864; box-shadow: inset 0 0 0 1px #178a50, 0 1px 4px #999;
  color: #fff; font-weight: 700; text-align: center;
}

/* shared tool buttons */
.bar { display: flex; align-items: center; background: linear-gradient(#fcfcfc, #f0f0f0); border-radius: 3px; }
.tb { display: flex; align-items: center; gap: 4px; height: 20px; margin-right: 7px; }
.tb:disabled { color: #848484; }
.arr { flex: none; width: 7px; height: 4px; margin-left: -2px; background: currentColor; clip-path: polygon(0 0, 100% 0, 50% 100%); }
.arr.far { margin: 0 1px; }
.sep { flex: none; width: 1px; height: 16px; margin: 0 5px 0 -1px; background: #c3c3c3; }
.more { margin-left: auto; padding-right: 4px; font-size: 14px; line-height: 14px; font-weight: 700; align-self: flex-start; }

/* menu bar */
.menubar { display: flex; align-items: center; height: 30px; padding-left: 7px; }
.menus { display: flex; gap: 11px; margin-right: 15px; }
.tip {
  width: 187px; height: 28px; margin-right: 2px; padding-right: 6px; line-height: 28px; text-align: center;
  background: linear-gradient(#fafafa, #f3f3f3); color: #5c2c00; text-decoration: none;
}
.account { flex: 1; display: flex; align-items: center; height: 28px; padding-left: 4px; background: linear-gradient(#fafafa, #f3f3f3); }
.account .tb { margin-right: 8px; }

/* first tool row */
.toolrow { display: flex; gap: 2px; height: 30px; padding: 1px 0; }
.files { width: 151px; padding-left: 5px; }
.files .sep { height: 24px; }
.draw { width: 547px; padding-left: 4px; }
.view { flex: 1; padding-left: 3px; }
.combo { display: flex; align-items: center; }
.combo select { appearance: none; border: 0; padding: 0; background: none; opacity: 1; }
.combo.dim { width: 61px; height: 22px; margin-right: 5px; padding: 0 2px; border: 1px solid #777; gap: 3px; color: #777; }
.combo.dim select { width: 28px; color: #777; }
.combo.plain { width: 61px; height: 22px; padding: 0 2px; background: #fff; }
.combo.plain select { flex: 1; }

/* main area */
.main { flex: 1; min-height: 0; display: flex; gap: 5px; }
.dock { width: 198px; flex: none; display: flex; flex-direction: column; border-right: 1px solid #a0a0a0; }
.dockhead { display: flex; align-items: center; gap: 10px; height: 16px; margin: 1px 0; padding-right: 3px; border: 1px solid #8c8c8c; border-left: 0; font-size: 13px; }
.dockhead span { flex: 1; }
.dockhead svg { width: 10px; height: 10px; fill: none; stroke: #111; }
.page { height: 22px; border: 1px solid #a0a0a0; border-top-color: #fff; flex: none; }
.docktools { display: flex; gap: 5px; align-items: center; height: 27px; padding-left: 6px; background: linear-gradient(#fbfbfb, #ececec); flex: none; }
.docktools button, .docktools svg { width: 18px; height: 16px; display: block; }

.tree { background: #fff; white-space: nowrap; }
.modules { flex: 1; margin: 0 1px 1px 2px; padding-top: 1px; border: 1px solid #828790; }
.branch { display: flex; align-items: center; height: 16px; padding-left: 6px; background: repeating-linear-gradient(90deg, #888 0 1px, transparent 1px 2px) 20px 8px / 4px 1px no-repeat; }
.branch .x { width: 10px; height: 16px; margin-right: 7px; }
.branch .i { margin-right: 5px; }
.modules ul { padding-left: 31px; background: repeating-linear-gradient(#888 0 1px, transparent 1px 2px) 12px 0 / 1px 100% no-repeat; }
.modules ul.last { background: none; }
.tree ul li {
  display: flex; align-items: center; height: 16px; padding-left: 12px;
  background:
    repeating-linear-gradient(#888 0 1px, transparent 1px 2px) 0 0 / 1px 100% no-repeat,
    repeating-linear-gradient(90deg, #888 0 1px, transparent 1px 2px) 0 8px / 11px 1px no-repeat;
}
.tree ul li:last-child { background-size: 1px 8px, 11px 1px; }
.tree ul .i { margin-right: 3px; }
.picked { display: flex; background: #d9d9d9; }
.tree ul .info { margin: 0 2px 0 0; }
.tree em { align-self: flex-start; font: italic 700 8px/10px "DejaVu Sans", sans-serif; text-shadow: 1px 0 #ffe000, -1px 0 #ffe000, 0 1px #ffe000, 0 -1px #ffe000; }

.right { flex: 1; min-width: 0; display: flex; flex-direction: column; }
.comps { height: 28px; margin-right: 3px; padding-left: 5px; }
.comps .wide { margin: 0 6px 0 1px; }
.floor { display: flex; align-items: center; gap: 6px; margin: 0 5px 0 -3px; }

.workspace { position: relative; flex: 1; min-height: 0; display: flex; background: #fff; }
.complist { width: 185px; display: flex; flex-direction: column; padding-left: 1px; border-right: 2px solid #a0a0a0; background: #f7f7f7; }
.search { display: flex; align-items: center; gap: 6px; height: 30px; padding: 6px 0 0 1px; }
.search input { width: 157px; height: 24px; padding: 0 2px; border: 1px solid #777; background: #fff; }
.search button { width: 16px; height: 16px; background: #eaf5fc; }
::placeholder { color: #777; opacity: 1; }
.search svg { width: 16px; height: 16px; display: block; }
.comptree { flex: 1; border: 1px solid #828790; border-top-width: 2px; padding-top: 1px; }
.comptree .branch { background-position: 21px 8px; }
.comptree ul { padding-left: 31px; }
.comptree ul li { padding-left: 9px; }
.comptree ul .i { margin: 0 5px 0 1px; }
.chosen { display: flex; background: #316ac5; padding-right: 4px; }

.props { flex: 1; display: flex; flex-direction: column; align-items: flex-start; padding: 1px 3px 0; }
.tab { height: 20px; padding: 0 7px; border: 1px solid #d9d9d9; border-bottom: 0; background: #fff; }
.proppage { flex: 1; align-self: stretch; display: flex; justify-content: flex-end; padding: 3px 1px 2px; border: 1px solid #ddd; }
.scroll { width: 17px; display: flex; flex-direction: column; background: #f0f0f0; border: 1px solid #a0a0a0; }
.scroll svg { width: 15px; height: 18px; fill: none; stroke: #505050; stroke-width: 2; }
.thumb { flex: 385; background: #cdcdcd; }
.track { flex: 143; }

/* section editor window */
.dialog {
  position: absolute; inset: 21px 22px 1px 157px; display: flex; flex-direction: column;
  padding: 1px 7px 8px 6px; border: 1px solid #222; background: #b9cde7; box-shadow: inset 0 0 0 1px #7fd6ef;
}
.dialog h2 { flex: none; height: 30px; margin: 0 -6px 0 -5px; padding: 10px 5px 0; font-size: 12px; line-height: 16px; font-weight: 400; background: linear-gradient(#99b4d1, #b9d1ea); }
.dbody { flex: 1; min-height: 0; display: flex; flex-direction: column; background: #f0f0f0; }
.tabs { display: flex; align-items: flex-end; height: 21px; flex: none; border-bottom: 1px solid #d9d9d9; }
.tabs button { height: 19px; padding: 0 6px; border: 1px solid #d9d9d9; border-bottom: 0; }
.tabs .on { height: 22px; margin-bottom: -1px; padding: 0 12px 2px 7px; background: #fff; border-color: #fff; }
.dcontent { flex: 1; min-height: 0; display: flex; flex-direction: column; margin: 0 2px 0 0; padding: 2px 2px 2px 4px; border-bottom: 1px solid #d9d9d9; background: #fff; }
.dbar { height: 27px; flex: none; padding-left: 4px; }
.dbar .sep { margin-right: 6px; }
.grip { width: 2px; height: 15px; margin-right: 5px; background: repeating-linear-gradient(#b9b9b9 0 2px, transparent 2px 4px); }
.coords { height: 29px; }
.coords .grip { margin-right: 3px; }
.radios { display: flex; gap: 9px; padding-right: 12px; margin-right: 4px; background: #f0f0f0; height: 20px; }
.radios label { display: flex; align-items: center; gap: 9px; }
.radios input { appearance: none; width: 11px; height: 11px; margin: 0; border: 1px solid #999; border-radius: 50%; background: #fff; }
.radios input:checked { border-color: #444; background: radial-gradient(#111 0 2px, #fff 3px); }
.num { display: flex; align-items: center; gap: 8px; margin-right: 12px; }
.coords .sep { margin-right: 1px; }
.spin { display: flex; align-items: center; width: 78px; height: 23px; padding-right: 3px; border: 1px solid #7a7a7a; }
.spin input { flex: 1; min-width: 0; padding: 0 10px 0 0; border: 0; background: none; text-align: right; color: #888; }
.spin svg { width: 8px; height: 17px; fill: #666; }
.canvas { flex: 1; min-height: 0; width: 100%; background: #000; fill: none; }
.gdim { stroke: #008000; }
.canvas .grid { stroke: #b4b4b4; }
.wdim { stroke: #fff; }
.section { stroke: #f00; stroke-width: 3; }
.gtext { fill: #b4b4b4; font: 12px "Liberation Mono", monospace; text-anchor: middle; }
.wtext { fill: #0f0; font: 700 18px "Liberation Serif", serif; text-anchor: middle; }
.dfoot { flex: none; height: 28px; padding: 2px; background: #f0f0f0; }
.dfoot button { height: 23px; padding: 0 4px; border: 1px solid #0078d7; background: #e5f1fb; }
.dstatus { flex: none; display: flex; gap: 2px; height: 24px; padding-top: 3px; background: #fff; }
.dstatus span { padding: 2px 4px; border: 1px solid #d7d7d7; border-left: 0; background: linear-gradient(#fcfcfc, #f0f0f0); }
.dstatus span:first-child { width: 98px; font-size: 11px; }
.dstatus span:nth-child(2) { flex: 1; border: 1px solid #d7d7d7; padding-left: 1px; border-right: 0; }
.dstatus svg { width: 12px; height: 12px; margin-left: -14px; align-self: flex-end; fill: #b9b9b9; }

/* status bar */
.status { display: flex; gap: 2px; height: 23px; flex: none; padding: 3px 0 0; background: #fff; }
.status span { padding: 1px; border: 1px solid #d7d7d7; background: linear-gradient(#fcfcfc, #f2f2f2); white-space: nowrap; }
.status span:nth-child(1) { width: 148px; }
.status span:nth-child(2) { width: 78px; }
.status span:nth-child(3) { width: 98px; }
.status span:nth-child(4) { width: 48px; }
.status span:nth-child(5) { flex: 1; }

.ime { position: absolute; right: 0; bottom: 40px; display: flex; align-items: center; gap: 6px; height: 24px; padding-right: 3px; background: #fff; border: 1px solid #c2d4e5; }
.ime svg { width: 16px; height: 16px; fill: #1e74c8; }
.ime .big { width: 28px; height: 28px; margin: -3px 0 0 -3px; }
.ime strong { color: #1e74c8; font-size: 15px; }
.ime .faint { fill: #b9c3d8; }

/* taskbar */
.taskbar { display: flex; height: 40px; flex: none; background: #000b0e; color: #fff; }
.start { width: 48px; background: #000; }
.start svg { width: 16px; height: 16px; display: block; margin: auto; }
.cortana { width: 344px; display: flex; align-items: center; gap: 6px; padding: 0 14px 0 9px; background: #333; color: #999; }
.ring { width: 22px; height: 22px; }
.mic { width: 12px; height: 18px; }
.cortana input { flex: 1; min-width: 0; padding: 0; border: 0; background: none; font-size: 14px; line-height: 20px; }
.cortana ::placeholder { color: #999; }
.apps { display: flex; padding-left: 2px; flex: 1; }
.apps button { width: 49px; display: grid; place-items: center; background: linear-gradient(transparent, transparent) center bottom / 40px 2px no-repeat; }
.apps button svg { width: 24px; height: 24px; }
.apps .run { background-image: linear-gradient(#76b9ed, #76b9ed); }
.apps .active { background-color: #333b3f; background-size: 100% 2px; }
.bars { width: 4px; height: 16px; margin: 12px 12px 0 8px; border: 1px solid #3c4548; border-width: 0 1px; }
.cpu, .clock { display: flex; flex-direction: column; align-items: center; justify-content: center; line-height: 18px; }
.cpu { width: 80px; }
.tray { display: flex; align-items: center; gap: 8px; padding-left: 2px; }
.tray svg { width: 16px; height: 16px; }
.tray .tail { margin-left: 4px; }
.tray span { width: 16px; font-size: 14px; text-align: center; }
.clock { width: 92px; }
.notes { width: 44px; border-right: 1px solid #555; }
.notes svg { width: 26px; height: 26px; display: block; margin: auto; }
.notes text { fill: #fff; font: 700 12px "Open Sans", sans-serif; text-anchor: middle; }
```
